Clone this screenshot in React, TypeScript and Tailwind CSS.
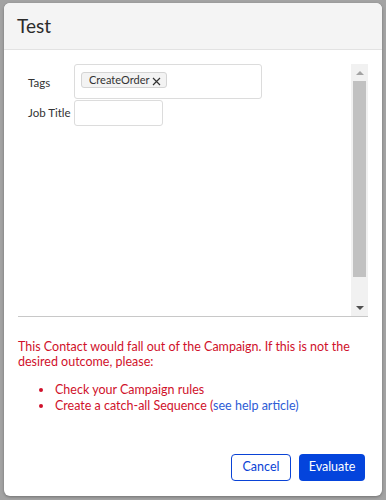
import React from 'react';

const font = { fontFamily: 'Lato, "Open Sans", sans-serif' };

function Scrollbar() {
  return (
    <div className="w-[17px] shrink-0 bg-[#f1f1f1] flex flex-col items-center">
      <div className="h-[17px] w-full flex items-center justify-center">
        <div className="w-0 h-0 border-l-[4px] border-r-[4px] border-b-[4px] border-l-transparent border-r-transparent border-b-[#a3a3a3]" />
      </div>
      <div className="w-[13px] h-[196px] bg-[#c1c1c1]" />
      <div className="flex-1" />
      <div className="h-[17px] w-full flex items-center justify-center">
        <div className="w-0 h-0 border-l-[4px] border-r-[4px] border-t-[4px] border-l-transparent border-r-transparent border-t-[#505050]" />
      </div>
    </div>
  );
}

export default function App() {
  return (
    <div className="w-[386px] h-[500px] bg-[#a3a3a3] overflow-hidden pt-[3px] pl-[4px]" style={font}>
      <div className="w-[378px] h-[493px] bg-white rounded-[6px] flex flex-col shadow-[0_1px_3px_rgba(0,0,0,0.3)]">
        <div className="h-[47px] bg-[#f4f4f4] border-b border-[#e2e2e2] rounded-t-[6px] flex items-center pl-[13px]">
          <h1 className="text-[19px] text-[#2b2b2b]">Test</h1>
        </div>

        <div className="px-[14px] pt-[14px]">
          <div className="h-[253px] flex border-b border-[#c8c8c8]">
            <div className="flex-1 pl-[10px] text-[11.5px] text-[#333]">
              <div className="flex">
                <div className="w-[46px] pt-[10px]">Tags</div>
                <div className="w-[188px] h-[35px] border border-[#dcdcdc] rounded-[3px] pl-[6px] pt-[6px]">
                  <span className="inline-flex items-center h-[16px] pl-[7px] pr-[5px] gap-[3px] bg-[#f3f3f3] border border-[#d4d4d4] rounded-[3px] text-[11px] text-[#333]">
                    CreateOrder
                    <svg width="9" height="9" viewBox="0 0 9 9" className="mt-[2px]">
                      <path d="M1 1L8 8M8 1L1 8" stroke="#333" strokeWidth="1.2" />
                    </svg>
                  </span>
                </div>
              </div>
              <div className="flex items-center mt-[1px]">
                <div className="w-[46px]">Job Title</div>
                <div className="w-[89px] h-[26px] border border-[#dcdcdc] rounded-[3px]" />
              </div>
            </div>
            <Scrollbar />
          </div>
        </div>

        <div className="px-[14px] mt-[22px] text-[12.5px] text-[#d0112b]">
          <p className="leading-[15px]">
            This Contact would fall out of the Campaign. If this is not the desired outcome, please:
          </p>
          <ul className="mt-[13px] leading-[16px]">
            <li className="flex items-center">
              <span className="w-[4px] h-[4px] rounded-full bg-[#d0112b] ml-[21px] mr-[12px]" />
              Check your Campaign rules
            </li>
            <li className="flex items-center">
              <span className="w-[4px] h-[4px] rounded-full bg-[#d0112b] ml-[21px] mr-[12px]" />
              <span>
                Create a catch-all Sequence (<a className="text-[#2d5cd6]">see help article)</a>
              </span>
            </li>
          </ul>
        </div>

        <div className="mt-auto flex justify-end gap-[8px] pr-[17px] pb-[15px]">
          <button className="w-[60px] h-[27px] border border-[#0a43d6] rounded-[4px] text-[12.5px] text-[#0a43d6] bg-white">
            Cancel
          </button>
          <button className="w-[66px] h-[27px] rounded-[4px] text-[12.5px] text-white bg-[#0444dc]">
            Evaluate
          </button>
        </div>
      </div>
    </div>
  );
}
